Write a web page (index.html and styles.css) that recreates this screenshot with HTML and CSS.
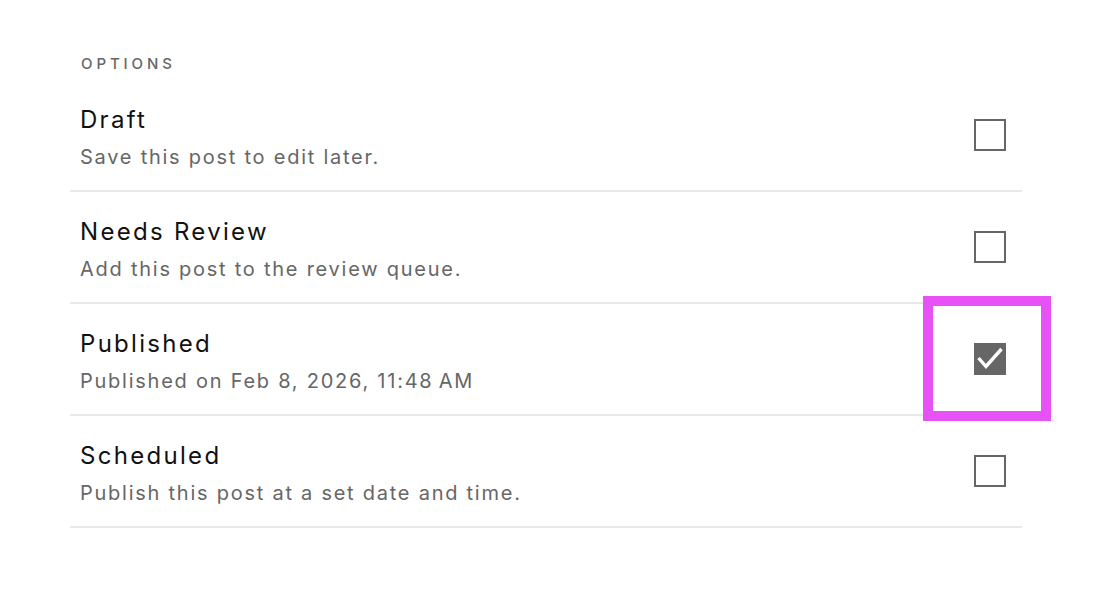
FILE: index.html
```html
<!DOCTYPE html>
<html>
<head>
<meta charset="utf-8">
<link rel="stylesheet" href="styles.css">
</head>
<body>
<div class="panel">
  <div class="heading">OPTIONS</div>
  <div class="list">
    <div class="row">
      <div class="text">
        <div class="title">Draft</div>
        <div class="sub">Save this post to edit later.</div>
      </div>
      <div class="box"></div>
    </div>
    <div class="row">
      <div class="text">
        <div class="title">Needs Review</div>
        <div class="sub">Add this post to the review queue.</div>
      </div>
      <div class="box"></div>
    </div>
    <div class="row">
      <div class="text">
        <div class="title">Published</div>
        <div class="sub">Published on Feb 8, 2026, 11:48&#8239;AM</div>
      </div>
      <div class="box checked">
        <svg viewBox="0 0 32 32" width="32" height="32"><path d="M4.5 15 L12 23.5 L27.5 6" fill="none" stroke="#fff" stroke-width="3.4"/></svg>
        <div class="highlight"></div>
      </div>
    </div>
    <div class="row">
      <div class="text">
        <div class="title">Scheduled</div>
        <div class="sub">Publish this post at a set date and time.</div>
      </div>
      <div class="box"></div>
    </div>
  </div>
</div>
</body>
</html>
```
FILE: styles.css
```css
html, body {
  margin: 0;
  padding: 0;
  background: #fff;
}
body {
  font-family: Inter, "Liberation Sans", sans-serif;
  width: 1098px;
  height: 594px;
  overflow: hidden;
}
.panel {
  padding: 54px 0 0 70px;
  width: 952px;
}
.heading {
  font-size: 15px;
  line-height: 20px;
  font-weight: 500;
  letter-spacing: 3.9px;
  color: #666;
  padding-left: 11px;
  margin-bottom: 6px;
}
.row {
  height: 110px;
  border-bottom: 2px solid #e8e8e8;
  display: flex;
  align-items: flex-start;
  justify-content: space-between;
  padding: 0 16px 0 10px;
}
.text {
  padding-top: 24px;
}
.title {
  font-size: 24px;
  line-height: 32px;
  letter-spacing: 2.3px;
  color: #111;
}
.sub {
  font-size: 20px;
  line-height: 28px;
  letter-spacing: 1.75px;
  margin-top: 7px;
  color: #666;
}
.box {
  align-self: center;
  width: 28px;
  height: 28px;
  border: 2px solid #666;
  position: relative;
}
.box.checked {
  width: 32px;
  height: 32px;
  border: none;
  background: #666;
}
.box svg {
  display: block;
}
.highlight {
  position: absolute;
  left: -51px;
  top: -47px;
  width: 108px;
  height: 105px;
  border: 10px solid #e752f6;
}
```
